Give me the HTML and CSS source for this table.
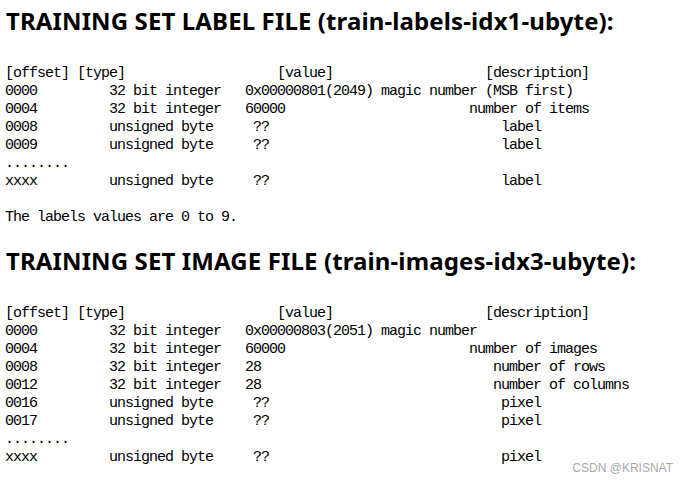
FILE: index.html
```html
<!DOCTYPE html>
<html>
<head>
<meta charset="utf-8">
<link rel="stylesheet" href="styles.css">
</head>
<body>
<div class="page">
<h2 class="title">TRAINING SET LABEL FILE (train-labels-idx1-ubyte):</h2>
<pre class="code">[offset] [type]                   [value]                   [description]
0000         32 bit integer   0x00000801(2049) magic number (MSB first)
0004         32 bit integer   60000                       number of items
0008         unsigned byte     ??                             label
0009         unsigned byte     ??                             label
........
xxxx         unsigned byte     ??                             label

The labels values are 0 to 9.</pre>
<h2 class="title">TRAINING SET IMAGE FILE (train-images-idx3-ubyte):</h2>
<pre class="code">[offset] [type]                   [value]                   [description]
0000         32 bit integer   0x00000803(2051) magic number
0004         32 bit integer   60000                       number of images
0008         32 bit integer   28                             number of rows
0012         32 bit integer   28                             number of columns
0016         unsigned byte     ??                             pixel
0017         unsigned byte     ??                             pixel
........
xxxx         unsigned byte     ??                             pixel</pre>
<div class="watermark">CSDN @KRISNAT</div>
</div>
</body>
</html>
```
FILE: styles.css
```css
html, body {
  margin: 0;
  padding: 0;
  background: #ffffff;
}
.page {
  position: relative;
  width: 690px;
  height: 483px;
  padding: 5px 0 0 6px;
  box-sizing: border-box;
  overflow: hidden;
}
.title {
  margin: 0;
  font-family: "Noto Sans", "Liberation Sans", sans-serif;
  font-weight: 700;
  font-size: 24px;
  letter-spacing: 0.12px;
  line-height: 32px;
  color: #000;
  white-space: nowrap;
}
.code {
  margin: 28px 0 18px -1px;
  font-family: "Liberation Mono", "DejaVu Sans Mono", monospace;
  font-size: 15px;
  letter-spacing: -1px;
  line-height: 18px;
  color: #000;
}
.watermark {
  position: absolute;
  right: 17px;
  bottom: 8px;
  font-family: "Liberation Sans", Arial, sans-serif;
  font-size: 12px;
  color: #a8a8a8;
}
```
